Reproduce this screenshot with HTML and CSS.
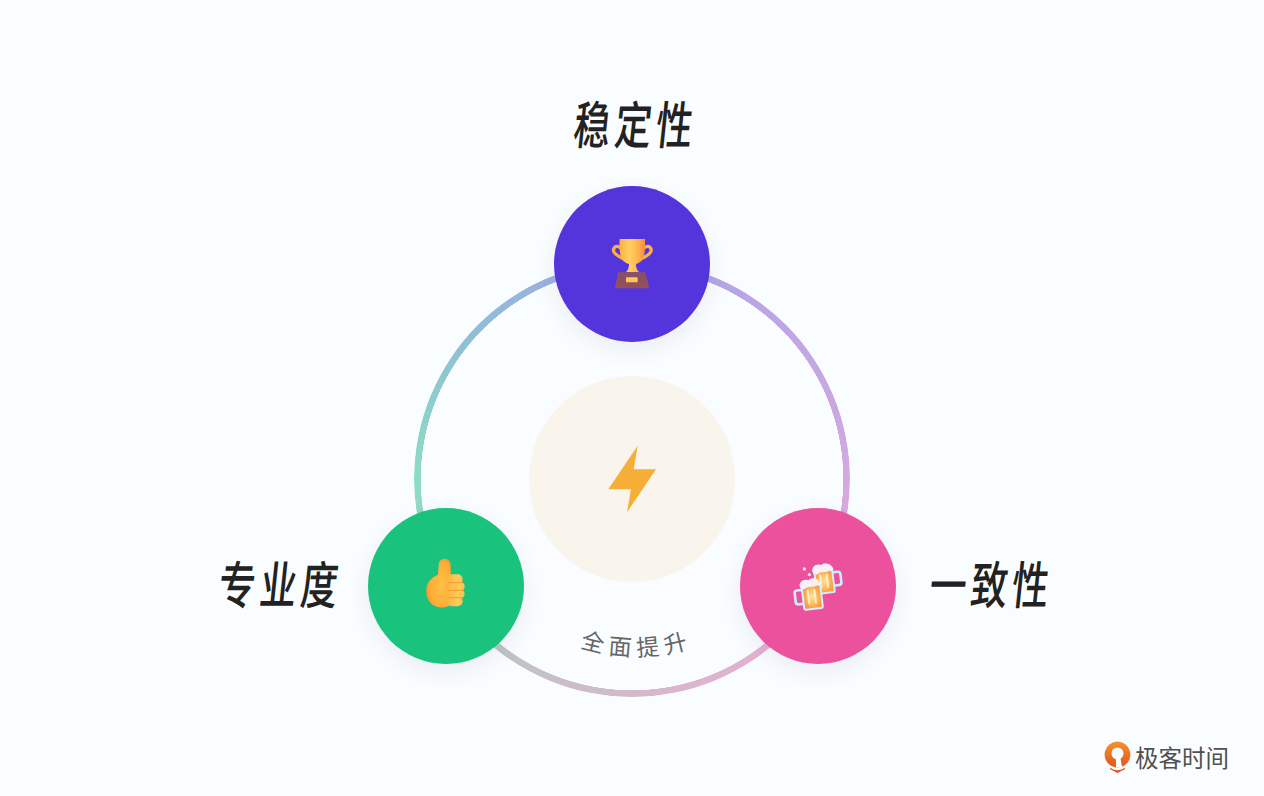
FILE: index.html
```html
<!DOCTYPE html>
<html lang="zh-CN">
<head>
<meta charset="utf-8">
<title>全面提升</title>
<link rel="stylesheet" href="styles.css">
</head>
<body>
<main class="canvas">
  <div class="ring"></div>
  <div class="hub">
    <svg class="icon-bolt" viewBox="-1 4 255 285"><polygon points="142,45 130,116 197,116 110,245 122,176 54,176" fill="#f6ae37"/></svg>
  </div>

  <h2 class="label label-top">稳定性</h2>
  <h2 class="label label-left">专业度</h2>
  <h2 class="label label-right">一致性</h2>

  <div class="node node-top">
    <svg class="icon-trophy" viewBox="-9 -3 270 270">
      <defs>
        <linearGradient id="gold" x1="0" x2="1" y1="0" y2="0"><stop offset="0" stop-color="#fbaf3c"/><stop offset=".4" stop-color="#ffd061"/><stop offset=".75" stop-color="#fdb049"/><stop offset="1" stop-color="#f78a40"/></linearGradient>
        <linearGradient id="base" x1="0" x2="0" y1="0" y2="1"><stop offset="0" stop-color="#8a5068"/><stop offset="1" stop-color="#94505a"/></linearGradient>
        <filter id="soft" x="-10%" y="-10%" width="120%" height="120%"><feGaussianBlur stdDeviation="1.500"/></filter>
      </defs>
      <g filter="url(#soft)">
        <path d="M92 84C76 72 66 86 73 98C80 108 94 112 106 120" fill="none" stroke="#fbae40" stroke-width="10"/>
        <path d="M162 84C178 72 188 86 181 98C174 108 160 112 148 120" fill="none" stroke="#fdb048" stroke-width="10"/>
        <path d="M89 57H165C168 104 160 126 138 132C138 142 140 150 148 157H107C115 150 117 142 117 132C93 126 86 104 89 57Z" fill="url(#gold)"/>
        <path d="M84 157H166L178 205H75Z" fill="url(#base)"/>
        <rect x="108" y="172" width="35" height="15" rx="2" fill="#ffc65c"/>
      </g>
    </svg>
  </div>

  <div class="node node-left">
    <svg class="icon-thumb" viewBox="3 11 210 225">
      <defs>
        <radialGradient id="skin" cx=".62" cy=".55" r=".7"><stop offset="0" stop-color="#ffc048"/><stop offset=".7" stop-color="#fdab35"/><stop offset="1" stop-color="#f4882c"/></radialGradient>
        <linearGradient id="finger" x1="0" x2="1" y1="0" y2="0"><stop offset="0" stop-color="#ffb33e"/><stop offset=".7" stop-color="#ffcb5a"/><stop offset="1" stop-color="#ffbe4e"/></linearGradient>
      </defs>
      <g filter="url(#soft)">
        <path d="M86 60C86 34 122 34 122 60V90H116L122 178C100 194 58 188 50 150C44 116 60 98 84 88Z" fill="url(#skin)"/>
        <rect x="110" y="87" width="48" height="30" rx="15" fill="url(#finger)"/>
        <rect x="110" y="109" width="54" height="29" rx="14.500" fill="url(#finger)"/>
        <rect x="110" y="132" width="54" height="28" rx="14" fill="url(#finger)"/>
        <rect x="110" y="153" width="48" height="30" rx="15" fill="url(#finger)"/>
        <path d="M116 112H158M116 135H162M116 157H158" stroke="#f39a30" stroke-width="3" fill="none"/>
      </g>
    </svg>
  </div>

  <div class="node node-right">
    <svg class="icon-beer" viewBox="2 3 225 210">
      <defs>
        <radialGradient id="beer" cx=".5" cy=".5" r=".65"><stop offset="0" stop-color="#ffe2a8"/><stop offset=".5" stop-color="#fbbe55"/><stop offset="1" stop-color="#f58f48"/></radialGradient>
      </defs>
      <g filter="url(#soft)">
        <g transform="rotate(-7 135 90)">
          <path d="M160 70H174Q182 70 182 78V102Q182 110 174 110H160" fill="none" stroke="#c6eefc" stroke-width="8"/>
          <rect x="102" y="54" width="60" height="78" rx="8" fill="#d2eefa"/>
          <rect x="108" y="60" width="48" height="66" rx="4" fill="url(#beer)"/>
          <rect x="118" y="72" width="6" height="42" rx="3" fill="#fff" opacity=".7"/>
          <rect x="138" y="72" width="6" height="42" rx="3" fill="#fff" opacity=".7"/>
          <path d="M100 62C96 46 116 36 128 44C138 36 158 44 160 54C168 60 158 70 150 64C140 70 128 62 118 68C110 74 102 70 100 62Z" fill="#f7f1f6"/>
        </g>
        <g transform="rotate(-7 95 135)">
          <path d="M68 116H52Q44 116 44 124V150Q44 158 52 158H68" fill="none" stroke="#c6eefc" stroke-width="8"/>
          <rect x="64" y="100" width="62" height="80" rx="8" fill="#d2eefa"/>
          <rect x="70" y="106" width="50" height="68" rx="4" fill="url(#beer)"/>
          <rect x="81" y="118" width="6" height="44" rx="3" fill="#fff" opacity=".7"/>
          <rect x="101" y="118" width="6" height="44" rx="3" fill="#fff" opacity=".7"/>
          <path d="M62 106C58 92 78 82 90 90C100 80 120 88 122 98C130 104 120 114 112 108C102 114 90 106 80 112C72 118 64 114 62 106Z" fill="#f7f1f6"/>
        </g>
        <circle cx="72" cy="57" r="5" fill="#f8dcec"/>
        <circle cx="87" cy="74" r="5" fill="#f8dcec"/>
      </g>
    </svg>
  </div>

  <svg class="arc" viewBox="0 0 160 60">
    <path id="arc-path" d="M0 10Q80 46 160 10" fill="none"/>
    <text class="arc-text"><textPath href="#arc-path" startOffset="50%" text-anchor="middle">全面提升</textPath></text>
  </svg>

  <div class="brand">
    <svg class="brand-mark" viewBox="0 0 28 32">
      <defs><linearGradient id="pin" x1="0" x2="0" y1="0" y2="1"><stop offset="0" stop-color="#f4932f"/><stop offset="1" stop-color="#e2541a"/></linearGradient></defs>
      <path d="M13.500 0.500A13 13 0 0 1 20 24.700L13.500 27L7 24.700A13 13 0 0 1 13.500 0.500Z" fill="url(#pin)"/>
      <circle cx="13.500" cy="12.500" r="6" fill="#f9fdff"/>
      <path d="M12 14H16L18 26L13.500 27L12 26Z" fill="#f9fdff"/>
      <path d="M6 27.500Q13.500 32 21 27.500L13.500 31.500Z" fill="#e2541a" stroke="#e2541a" stroke-width="1"/>
    </svg>
    <span class="brand-name">极客时间</span>
  </div>
</main>
</body>
</html>
```
FILE: styles.css
```css
* { box-sizing: border-box; }
html, body { margin: 0; height: 100%; overflow: hidden; background: #f9fdff; }
.canvas {
  position: relative;
  width: 1264px;
  height: 796px;
  background: #f9fdff;
  font-family: "Noto Sans CJK SC", "Noto Sans", sans-serif;
}
.ring {
  position: absolute;
  left: 414px;
  top: 261px;
  width: 436px;
  height: 436px;
  border-radius: 50%;
  background: conic-gradient(#aaa6e2 0deg, #bda6e4 40deg, #d4a8e0 90deg, #e6afd2 135deg, #d6b8cc 175deg, #bdc5c6 220deg, #8edcc4 270deg, #90bfd6 310deg, #9cb0e0 340deg, #aaa6e2 360deg);
  -webkit-mask: radial-gradient(closest-side, transparent 211px, #000 211.500px);
  mask: radial-gradient(closest-side, transparent 211px, #000 211.500px);
}
.hub {
  position: absolute;
  left: 529px;
  top: 376px;
  width: 206px;
  height: 206px;
  border-radius: 50%;
  background: #f9f5ec;
  display: flex;
  align-items: center;
  justify-content: center;
}
.icon-bolt { width: 85px; height: 95px; display: block; }
.node {
  position: absolute;
  width: 156px;
  height: 156px;
  border-radius: 50%;
  display: flex;
  align-items: center;
  justify-content: center;
  box-shadow: 0 8px 22px rgba(70, 70, 110, 0.08);
}
.node-top { left: 554px; top: 186px; background: #5435db; }
.node-left { left: 368px; top: 508px; background: #19c37d; }
.node-right { left: 740px; top: 508px; background: #ec519d; }
.icon-trophy { width: 90px; height: 90px; display: block; }
.icon-thumb { width: 70px; height: 75px; display: block; }
.icon-beer { width: 75px; height: 70px; display: block; }
.label {
  position: absolute;
  margin: 0;
  width: 180px;
  height: 60px;
  line-height: 60px;
  text-align: center;
  white-space: nowrap;
  font-size: 51px;
  font-weight: 500;
  letter-spacing: 6px;
  color: #222222;
  transform: skewX(-6deg) scaleX(0.72);
}
.label-top { left: 546px; top: 92px; }
.label-left { left: 191px; top: 552px; }
.label-right { left: 902px; top: 552px; }
.arc {
  position: absolute;
  left: 557px;
  top: 628px;
  width: 160px;
  height: 60px;
  overflow: visible;
}
.arc-text {
  font-size: 23px;
  letter-spacing: 6px;
  fill: #666666;
  font-weight: 400;
  font-family: "Noto Sans CJK SC", sans-serif;
}
.brand {
  position: absolute;
  left: 1104px;
  top: 741px;
  display: flex;
  align-items: center;
  gap: 3px;
}
.brand-mark { width: 28px; height: 32px; display: block; }
.brand-name {
  font-size: 23.500px;
  line-height: 32px;
  color: #505050;
  white-space: nowrap;
  font-weight: 400;
}
```
